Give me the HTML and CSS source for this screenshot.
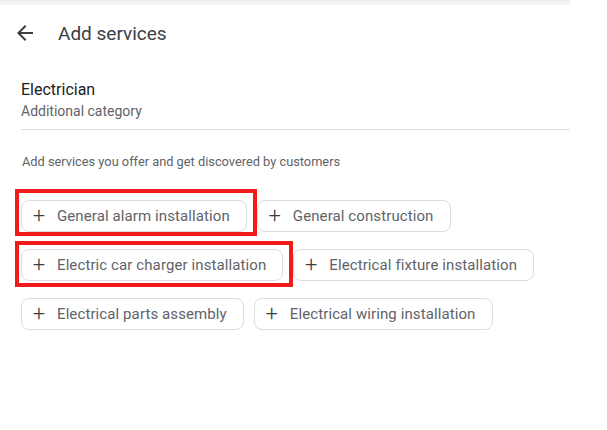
FILE: index.html
```html
<!DOCTYPE html>
<html lang="en">
<head>
<meta charset="utf-8">
<title>Add services</title>
<link rel="stylesheet" href="styles.css">
</head>
<body>
<div class="page">
  <div class="topbar"></div>
  <header class="header">
    <svg class="back" viewBox="0 0 24 24" width="24" height="24" aria-hidden="true"><path d="M20 11H7.83l5.59-5.59L12 4l-8 8 8 8 1.41-1.41L7.83 13H20v-2z"/></svg>
    <h1 class="title">Add services</h1>
  </header>
  <section class="category">
    <div class="cat-name">Electrician</div>
    <div class="cat-sub">Additional category</div>
  </section>
  <p class="hint">Add services you offer and get discovered by customers</p>
  <div class="chips">
    <button class="chip mark mark-1"><span class="plus">+</span>General alarm installation</button>
    <button class="chip"><span class="plus">+</span>General construction</button>
    <button class="chip mark mark-2"><span class="plus">+</span>Electric car charger installation</button>
    <button class="chip"><span class="plus">+</span>Electrical fixture installation</button>
    <button class="chip"><span class="plus">+</span>Electrical parts assembly</button>
    <button class="chip"><span class="plus">+</span>Electrical wiring installation</button>
  </div>
</div>
</body>
</html>
```

FILE: styles.css
```css
* { box-sizing: border-box; }
html, body { margin: 0; padding: 0; background: #fff; }
body { font-family: Roboto, "Noto Sans", Arial, sans-serif; color: #202124; }
.page { width: 607px; height: 430px; overflow: hidden; }
.topbar { width: 570px; height: 5px; background: linear-gradient(#ececec, #f6f6f6); }
.header { display: flex; align-items: center; height: 56px; padding-left: 13px; }
.back { fill: #3c4043; flex: none; }
.title { margin: 0 0 0 21px; font-size: 19px; font-weight: 400; color: #3c4043; }
.category { width: 549px; margin-left: 21px; padding-top: 18px; padding-bottom: 8px; border-bottom: 1px solid #dadce0; }
.cat-name { font-size: 16px; line-height: 22px; color: #202124; }
.cat-sub { font-size: 14px; line-height: 20px; color: #5f6368; }
.hint { margin: 24px 0 0 22px; font-size: 12.8px; line-height: 16px; color: #5f6368; }
.chips { display: flex; flex-wrap: wrap; column-gap: 10px; row-gap: 17px; width: 550px; margin: 30px 0 0 21px; }
.chip { position: relative; display: flex; align-items: center; height: 32px; padding: 0 16px 0 9px; border: 1px solid #dadce0; border-radius: 8px; background: #fff; font-family: Roboto, "Noto Sans", Arial, sans-serif; font-size: 15px; color: #5f6368; letter-spacing: 0.1px; }
.plus { font-size: 22px; font-weight: 300; width: 16px; margin-right: 10px; line-height: 1; color: #3c4043; text-align: center; }
.mark::after { content: ""; position: absolute; border: 4px solid #f01c1c; pointer-events: none; }
.mark-1::after { top: -12px; left: -7px; right: -11px; bottom: -5px; }
.mark-2::after { top: -9px; left: -7px; right: -11px; bottom: -7px; }
```
